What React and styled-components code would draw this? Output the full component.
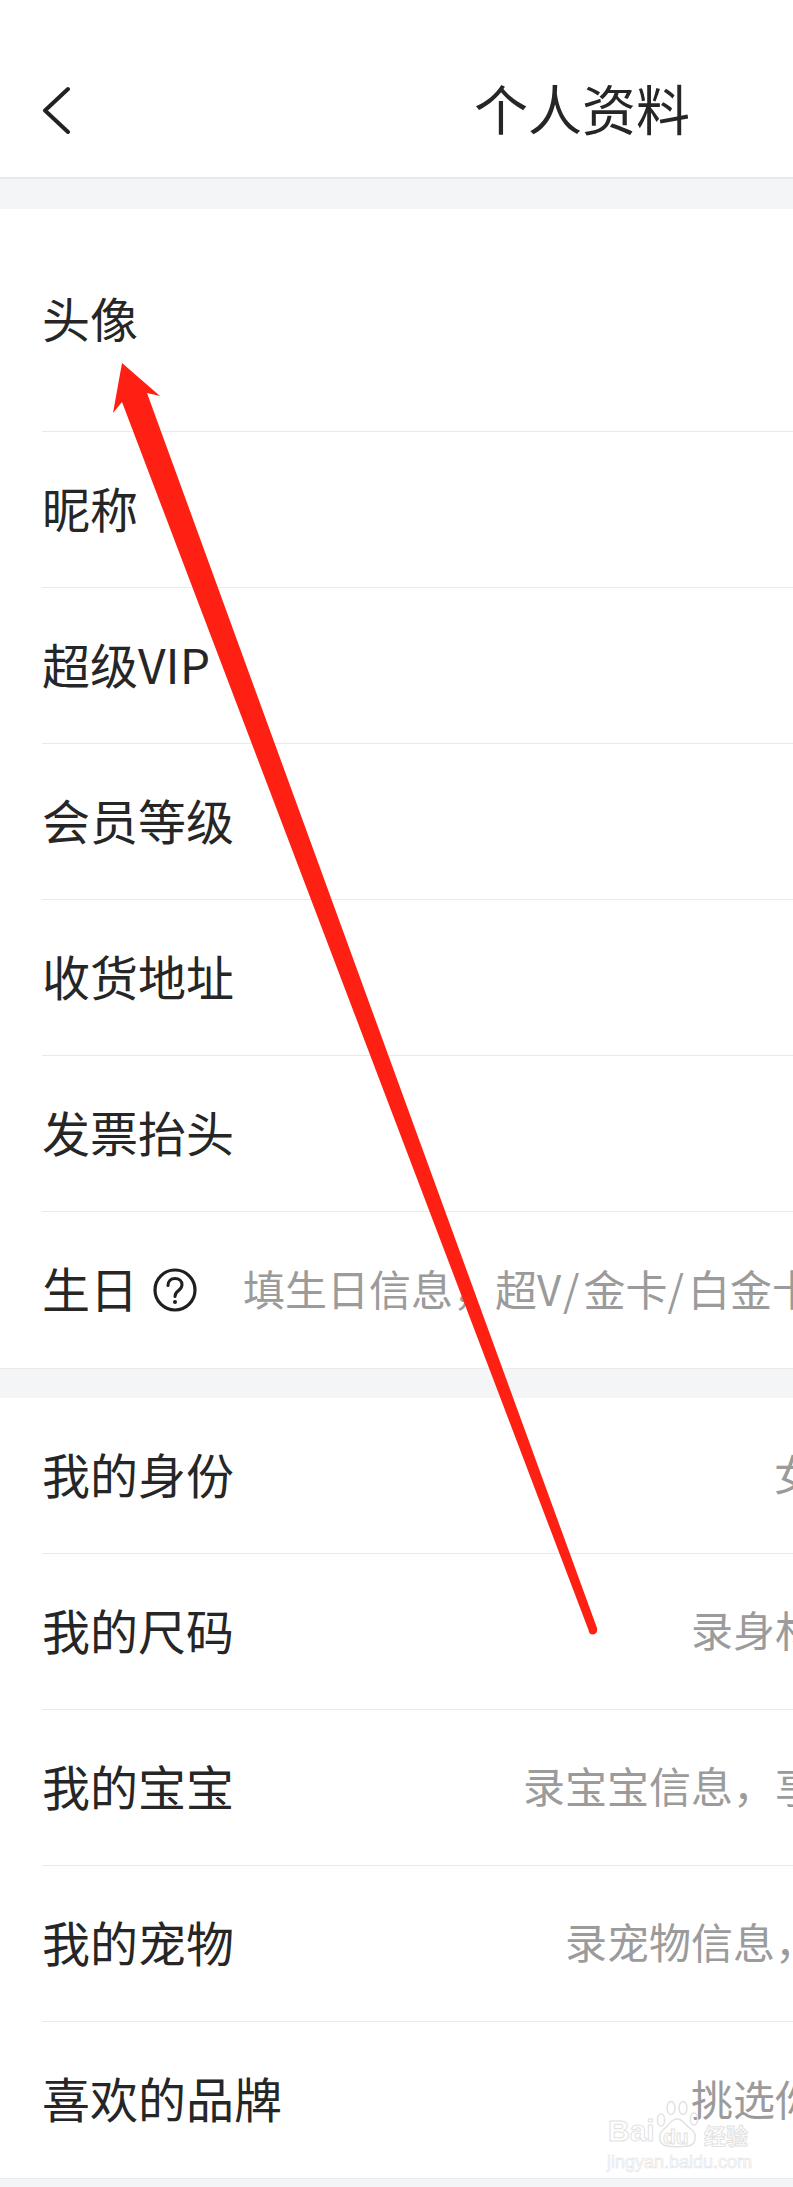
import React from "react";
import styled, { createGlobalStyle } from "styled-components";

const GlobalStyle = createGlobalStyle`
  html, body {
    margin: 0;
    padding: 0;
    background: #fff;
  }
  * {
    box-sizing: border-box;
  }
`;

const Page = styled.div`
  position: relative;
  width: 793px;
  height: 2187px;
  overflow: hidden;
  background: #f4f5f7;
  font-family: "Noto Sans CJK SC", "Noto Sans", sans-serif;
  color: #262626;
`;

const Header = styled.header`
  display: flex;
  align-items: center;
  height: 178px;
  padding: 42px 0 0 42px;
  background: #fff;
  border-bottom: 1px solid #e6e6e8;
`;

const BackIcon = styled.svg`
  flex: none;
  width: 30px;
  height: 48px;
`;

const Title = styled.h1`
  margin: 0 0 4px 402px;
  font-size: 54px;
  font-weight: 400;
  line-height: 60px;
  white-space: nowrap;
`;

const Gap = styled.div`
  height: ${props => props.$height}px;
  border-top: 1px solid #e9eaec;
  background: #f4f5f7;
`;

const Section = styled.section`
  background: #fff;
  padding-left: 42px;
`;

const Row = styled.div`
  display: grid;
  grid-template-columns: ${props => props.$labelWidth}px 1fr;
  align-items: center;
  height: ${props => props.$height || 156}px;
  border-bottom: 1px solid #e9e9eb;
  white-space: nowrap;
  &:last-child {
    border-bottom: none;
  }
`;

const LabelCell = styled.div`
  display: flex;
  align-items: center;
  gap: 15px;
`;

const Label = styled.span`
  font-size: 48px;
  line-height: 60px;
  margin-bottom: 6px;
`;

const HelpIcon = styled.svg`
  flex: none;
  width: 44px;
  height: 44px;
`;

const Value = styled.span`
  font-size: 42px;
  line-height: 60px;
  margin-bottom: 5px;
  color: #9b9b9b;
`;

const ValueLatin = styled.span`
  letter-spacing: 4px;
`;

const ArrowLayer = styled.svg`
  position: absolute;
  top: 0;
  left: 0;
  width: 793px;
  height: 2187px;
  pointer-events: none;
`;

const Watermark = styled.div`
  position: absolute;
  left: 606px;
  top: 2100px;
  width: 150px;
  height: 70px;
  color: #fff;
  -webkit-text-stroke: 1px #e2e2e2;
  pointer-events: none;
`;

const WatermarkPaw = styled.svg`
  position: absolute;
  left: 50px;
  top: 0;
  width: 44px;
  height: 48px;
`;

const WatermarkBrand = styled.span`
  position: absolute;
  left: 2px;
  top: 15px;
  font-family: "Liberation Sans", sans-serif;
  font-size: 30px;
  font-weight: 700;
  line-height: 32px;
`;

const WatermarkDu = styled.span`
  position: absolute;
  left: 57px;
  top: 25px;
  font-family: "Liberation Sans", sans-serif;
  font-size: 21px;
  font-weight: 700;
  line-height: 24px;
`;

const WatermarkCn = styled.span`
  position: absolute;
  left: 98px;
  top: 20px;
  font-size: 22px;
  font-weight: 700;
  line-height: 28px;
`;

const WatermarkUrl = styled.span`
  position: absolute;
  left: 1px;
  top: 52px;
  font-family: "Liberation Sans", sans-serif;
  font-size: 18px;
  line-height: 20px;
  -webkit-text-stroke: 0.6px #e2e2e2;
`;

const basicRows = [
  { label: "头像", height: 223 },
  { label: "昵称" },
  { label: "超级VIP" },
  { label: "会员等级" },
  { label: "收货地址" },
  { label: "发票抬头" },
];

const profileRows = [
  { label: "我的身份", value: "女", start: 774 },
  { label: "我的尺码", value: "录身材信息", start: 691 },
  { label: "我的宝宝", value: "录宝宝信息，享", start: 523 },
  { label: "我的宠物", value: "录宠物信息，", start: 565 },
  { label: "喜欢的品牌", value: "挑选你", start: 691 },
];

const App = () => (
  <Page>
    <GlobalStyle />
    <Header>
      <BackIcon viewBox="0 0 30 48">
        <path
          d="M26 3 L3 24.5 L26 46"
          fill="none"
          stroke="#222"
          strokeWidth="4"
          strokeLinecap="round"
          strokeLinejoin="round"
        />
      </BackIcon>
      <Title>个人资料</Title>
    </Header>
    <Gap $height={31} />
    <Section>
      {basicRows.map(row => (
        <Row key={row.label} $labelWidth={400} $height={row.height}>
          <Label>{row.label}</Label>
        </Row>
      ))}
      <Row $labelWidth={201}>
        <LabelCell>
          <Label>生日</Label>
          <HelpIcon viewBox="0 0 44 44">
            <circle cx="22" cy="22" r="20" fill="none" stroke="#1f1f1f" strokeWidth="3.2" />
            <path
              d="M15 17.5 C15 13 18 10.5 22 10.5 C26 10.5 29 13 29 16.8 C29 20 27 21.4 25 23 C23.2 24.4 22 25.6 22 28.6"
              fill="none"
              stroke="#1f1f1f"
              strokeWidth="3"
              strokeLinecap="round"
            />
            <circle cx="22" cy="34" r="2" fill="#1f1f1f" />
          </HelpIcon>
        </LabelCell>
        <Value>
          填生日信息，超<ValueLatin>V/</ValueLatin>金卡<ValueLatin>/</ValueLatin>白金卡会员
        </Value>
      </Row>
    </Section>
    <Gap $height={30} />
    <Section>
      {profileRows.map(row => (
        <Row key={row.label} $labelWidth={row.start - 42}>
          <Label>{row.label}</Label>
          <Value>{row.value}</Value>
        </Row>
      ))}
    </Section>
    <Gap $height={10} />
    <ArrowLayer viewBox="0 0 793 2187">
      <path
        d="M122 363 L160 396 L147 393 L597 1628 Q598 1634 593 1634.5 Q589 1634.5 588.5 1630 L122 402 L113 413 Z"
        fill="#fe2013"
      />
    </ArrowLayer>
    <Watermark>
      <WatermarkPaw viewBox="0 0 44 48">
        <g fill="none" stroke="#e2e2e2" strokeWidth="1.5">
          <ellipse cx="5" cy="20" rx="3.6" ry="6" />
          <ellipse cx="15" cy="8" rx="4" ry="6.5" />
          <ellipse cx="27" cy="8" rx="4" ry="6.5" />
          <ellipse cx="38" cy="19" rx="3.6" ry="6" />
          <path d="M21 19 C14 19 13 26 8 29 C2 33 2 45 11 46 C17 47 25 47 32 46 C41 45 41 33 35 29 C29 26 28 19 21 19 Z" />
        </g>
      </WatermarkPaw>
      <WatermarkBrand>Bai</WatermarkBrand>
      <WatermarkDu>du</WatermarkDu>
      <WatermarkCn>经验</WatermarkCn>
      <WatermarkUrl>jingyan.baidu.com</WatermarkUrl>
    </Watermark>
  </Page>
);

export default App;
